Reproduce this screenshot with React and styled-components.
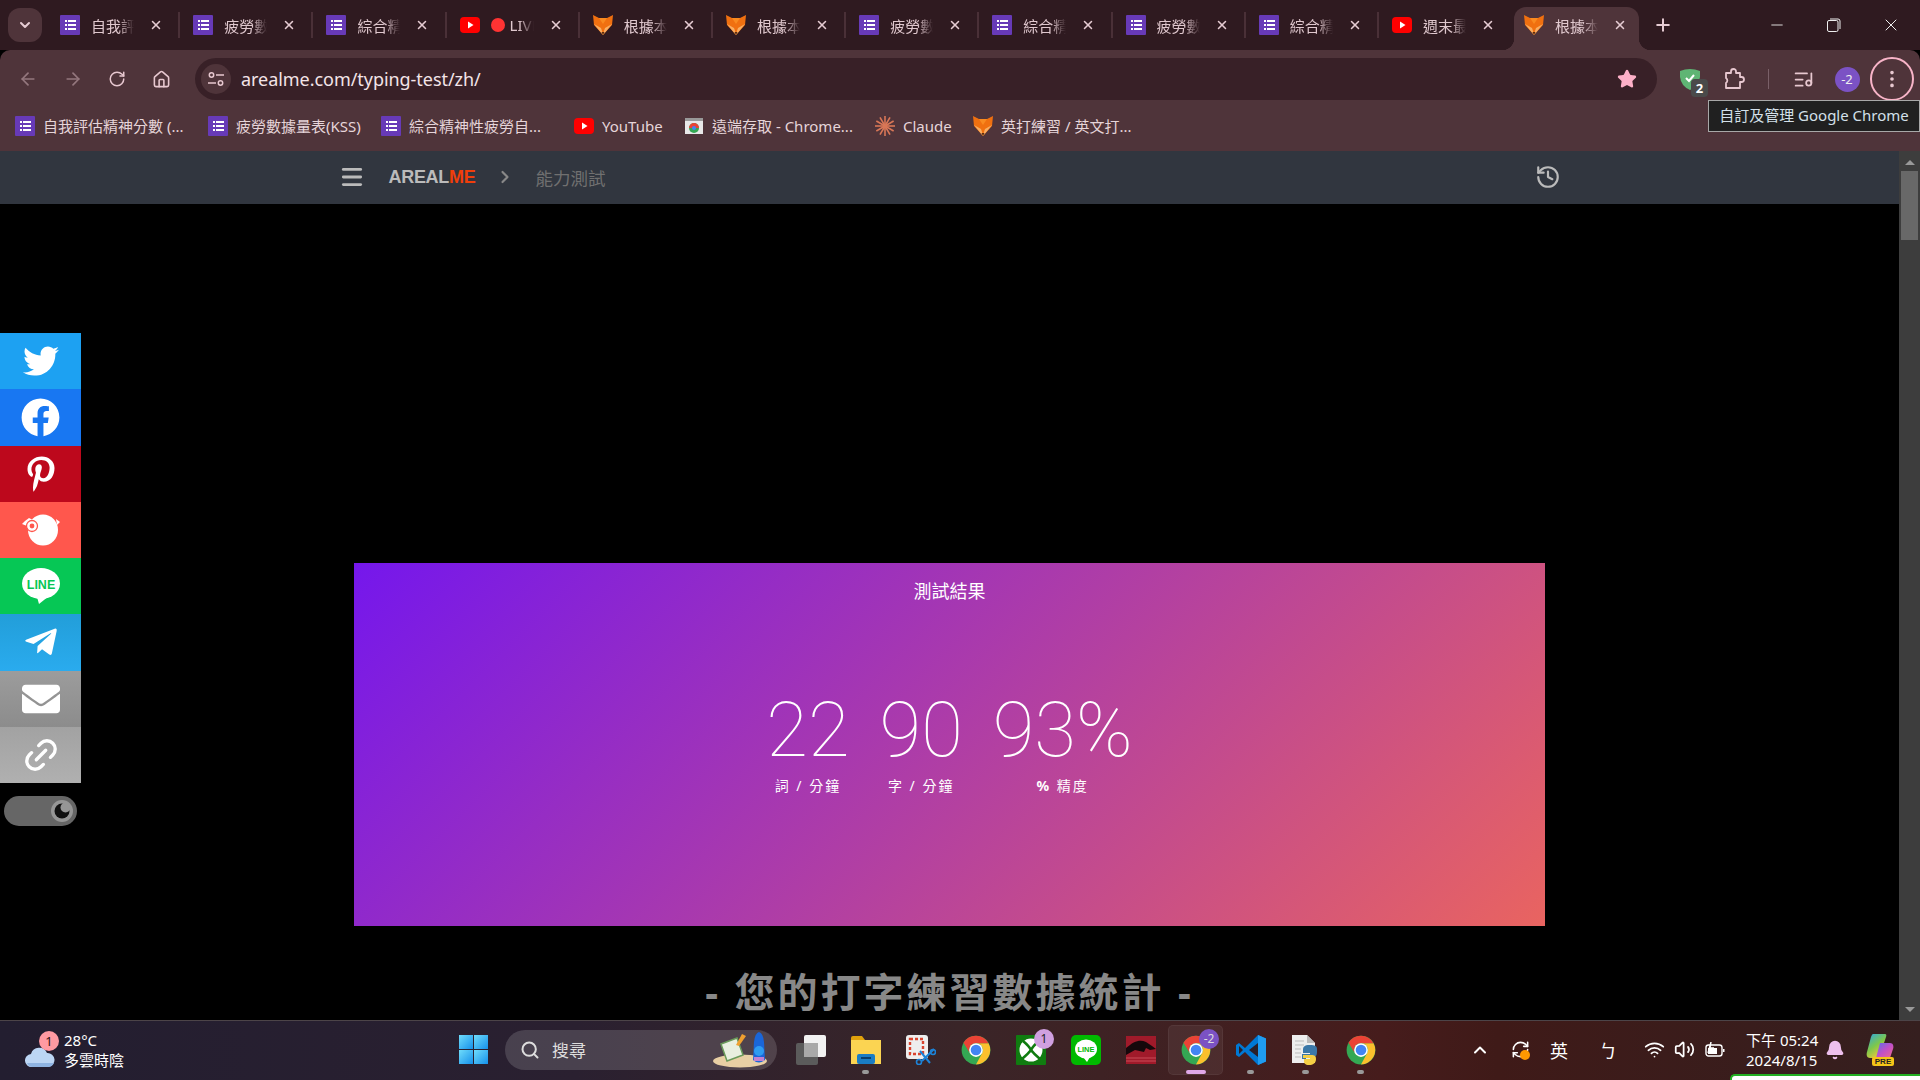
import styled, { createGlobalStyle } from "styled-components";
import {
  ArrowLeft,
  ArrowRight,
  RotateCw,
  Home,
  X,
  Plus,
  Minus,
  ChevronDown,
  ChevronUp,
  ChevronRight,
  Menu,
  History,
  MoreVertical,
  ListMusic,
  Star,
  Search,
  Link2,
  Bell,
  Wifi,
  Volume2,
  RefreshCw,
} from "lucide-react";
import {
  FaTwitter,
  FaFacebook,
  FaPinterestP,
  FaTelegramPlane,
  FaEnvelope,
} from "react-icons/fa";

const FONT = `"Noto Sans", "Noto Sans CJK TC", sans-serif`;

const GlobalStyle = createGlobalStyle`
  html, body {
    margin: 0;
    padding: 0;
    background: #000;
    overflow: hidden;
  }
  * {
    box-sizing: border-box;
  }
`;

/* little drawn icons */
const FormsIcon = () => (
  <svg width="20" height="20" viewBox="0 0 20 20">
    <rect width="20" height="20" rx="1" fill="#673ab7" />
    <rect x="5" y="5" width="2" height="2" fill="#fff" />
    <rect x="8" y="5" width="8" height="2" fill="#fff" />
    <rect x="5" y="9" width="2" height="2" fill="#fff" />
    <rect x="8" y="9" width="8" height="2" fill="#fff" />
    <rect x="5" y="13" width="2" height="2" fill="#fff" />
    <rect x="8" y="13" width="8" height="2" fill="#fff" />
  </svg>
);

const YoutubeIcon = () => (
  <svg width="20" height="20" viewBox="0 0 20 20">
    <rect y="2" width="20" height="16" rx="4" fill="#f00" />
    <path d="M8 6.5 L13.5 10 L8 13.5 Z" fill="#fff" />
  </svg>
);

const FoxIcon = () => (
  <svg width="20" height="20" viewBox="0 0 20 20">
    <path d="M0 0 L6 3 H14 L20 0 L19 10 L10 20 L1 10 Z" fill="#f07010" />
    <path d="M1 9 L8 13 L10 19 L12 13 L19 9 L10 20 Z" fill="#f9ae62" />
    <path d="M6 3 H14 L10 9 Z" fill="#f98a20" />
    <path d="M8.5 17 H11.5 L10 20 Z" fill="#5a2d10" />
  </svg>
);

const ClaudeIcon = () => (
  <svg width="20" height="20" viewBox="0 0 20 20" stroke="#d97757" strokeWidth="1.6">
    {[0, 30, 60, 90, 120, 150, 180, 210, 240, 270, 300, 330].map((a) => (
      <line key={a} x1="10" y1="10" x2="10" y2="0" transform={`rotate(${a} 10 10)`} />
    ))}
  </svg>
);

const RemoteIcon = () => (
  <svg width="20" height="20" viewBox="0 0 20 20">
    <rect x="1" y="2" width="18" height="16" fill="#e8e8e8" />
    <rect x="1" y="2" width="18" height="3" fill="#999" />
    <circle cx="10" cy="12" r="5" fill="#34a853" />
    <path d="M5 12a5 5 0 0 1 10 0z" fill="#ea4335" />
    <circle cx="10" cy="12" r="2" fill="#4285f4" />
  </svg>
);

const SiteInfoIcon = () => (
  <svg width="18" height="18" viewBox="0 0 18 18" fill="none" stroke="currentColor" strokeWidth="1.5">
    <circle cx="4.5" cy="5" r="2.2" />
    <path d="M9 5 H17" />
    <path d="M1 13 H9" />
    <circle cx="13.5" cy="13" r="2.2" />
  </svg>
);

const PuzzleIcon = () => (
  <svg width="22" height="22" viewBox="0 0 22 22" fill="none" stroke="currentColor" strokeWidth="1.8" strokeLinejoin="round">
    <path d="M3 5 H8 V3.5 A2.5 2.5 0 0 1 13 3.5 V5 H17 V9 H18.5 A2.5 2.5 0 0 1 18.5 14 H17 V20 H3 V15 A3 3 0 0 0 3 10 Z" />
  </svg>
);

const ChromeIcon = () => (
  <svg width="30" height="30" viewBox="0 0 48 48">
    <circle cx="24" cy="24" r="23" fill="#34a853" />
    <path d="M24 13h20a23 23 0 0 1-20 34l9.5-17.5A11 11 0 0 0 24 13z" fill="#fbc02d" />
    <path d="M4 12.5A23 23 0 0 1 44 13H24a11 11 0 0 0-9.5 16.5z" fill="#ea4335" />
    <circle cx="24" cy="24" r="11" fill="#fff" />
    <circle cx="24" cy="24" r="8.5" fill="#4285f4" />
  </svg>
);

const TaskViewIcon = () => (
  <svg width="30" height="30" viewBox="0 0 30 30">
    <rect x="0" y="8" width="22" height="22" rx="2" fill="#5b5b5b" />
    <rect x="8" y="0" width="22" height="22" rx="2" fill="#f2f2f2" />
    <rect x="8" y="8" width="14" height="14" fill="#a9a9a9" />
  </svg>
);

const FolderIcon = () => (
  <svg width="30" height="30" viewBox="0 0 30 30">
    <path d="M0 3a2 2 0 0 1 2-2h9l3 4H0z" fill="#e0a10c" />
    <rect y="5" width="30" height="24" fill="#fbd452" />
    <rect x="6" y="19" width="18" height="10" rx="2" fill="#1a7dc4" />
    <rect x="10" y="22" width="10" height="2" fill="#083f6e" />
  </svg>
);

const SnipIcon = () => (
  <svg width="30" height="30" viewBox="0 0 30 30">
    <rect width="22" height="24" rx="3" fill="#eee" />
    <rect x="4" y="4" width="13" height="15" fill="none" stroke="#d9442f" strokeWidth="2.4" strokeDasharray="3 2" />
    <path d="M14 16 L24 28 M28 14 L16 26" stroke="#1d82d6" strokeWidth="2" />
    <circle cx="13" cy="27" r="2.5" fill="none" stroke="#1d82d6" strokeWidth="1.6" />
    <circle cx="27" cy="17" r="2.5" fill="none" stroke="#1d82d6" strokeWidth="1.6" />
  </svg>
);

const XboxIcon = () => (
  <svg width="30" height="30" viewBox="0 0 30 30">
    <rect width="30" height="30" rx="1" fill="#107c10" />
    <circle cx="15" cy="15" r="11.5" fill="#fff" />
    <path d="M7 6 Q13 11 15 15 Q17 11 23 6" fill="none" stroke="#107c10" strokeWidth="2.6" />
    <path d="M6 24 Q12 19 15 15 Q18 19 24 24" fill="none" stroke="#107c10" strokeWidth="2.6" />
  </svg>
);

const LineAppIcon = () => (
  <svg width="30" height="30" viewBox="0 0 30 30">
    <rect width="30" height="30" rx="5" fill="#00b900" />
    <ellipse cx="15" cy="14" rx="11" ry="9.5" fill="#fff" />
    <path d="M12 22 L16 27 L19 22 Z" fill="#fff" />
    <text x="15" y="17" textAnchor="middle" fontSize="7.5" fontWeight="700" fontFamily="Liberation Sans" fill="#00b900">LINE</text>
  </svg>
);

const DragonIcon = () => (
  <svg width="30" height="30" viewBox="0 0 30 30">
    <rect y="1" width="30" height="28" fill="#a01a2a" />
    <path d="M0 13 C8 6 14 4 20 7 L26 11 L30 14 L24 15 L20 13 L18 17 L9 15 L0 20 Z" fill="#16080b" />
    <path d="M0 23 H30 M0 26 H30" stroke="#c84a56" strokeWidth="1" />
  </svg>
);

const VscodeIcon = () => (
  <svg width="30" height="30" viewBox="0 0 30 30">
    <path d="M22 0 L30 3.5 V26.5 L22 30 L9 17 L3 22 L0 20 V10 L3 8 L9 13 Z" fill="#0078d4" />
    <path d="M22 0 L30 3.5 V26.5 L22 30 Z" fill="#1f9cf0" />
    <path d="M22 8 L13 15 L22 22 Z" fill="#2a1f28" />
    <path d="M3 11 L7 15 L3 19 Z" fill="#2a1f28" />
  </svg>
);

const PythonFileIcon = () => (
  <svg width="30" height="30" viewBox="0 0 30 30">
    <path d="M1 0 H16 L24 8 V28 H1 Z" fill="#eee" />
    <path d="M16 0 V8 H24 Z" fill="#bbb" />
    <path d="M4 6 H13 M4 10 H13 M4 14 H10 M4 18 H10 M4 22 H10" stroke="#bbb" strokeWidth="1" />
    <path d="M19 10 C13 10 12 12 12 15 V18 H19 V19 H11 V24 H15 V22 H22 C25 22 26 20 26 17 V14 C26 11 24 10 19 10 Z" fill="#3b78a8" />
    <path d="M12 20 H20 C24 20 25 21 25 24 C25 28 22 30 18 30 C14 30 13 28 13 26 V24 H19 V23 H12 Z" fill="#f5cf45" />
  </svg>
);

const WindowsLogo = () => (
  <svg width="29" height="29" viewBox="0 0 29 29">
    <defs>
      <linearGradient id="winBlue" x1="0" y1="0" x2="1" y2="1">
        <stop offset="0" stopColor="#6fdcfb" />
        <stop offset="1" stopColor="#1590ea" />
      </linearGradient>
    </defs>
    <rect width="14" height="14" fill="url(#winBlue)" />
    <rect x="15" width="14" height="14" fill="url(#winBlue)" />
    <rect y="15" width="14" height="14" fill="url(#winBlue)" />
    <rect x="15" y="15" width="14" height="14" fill="url(#winBlue)" />
  </svg>
);

const WeatherCloud = () => (
  <svg width="30" height="22" viewBox="0 0 30 22">
    <path d="M7 21a6.5 6.5 0 0 1-1-13 8.5 8.5 0 0 1 16-1 7 7 0 0 1 1 14z" fill="#bcd6f4" />
    <path d="M7 21a6 6 0 0 1-5-4h27a7 7 0 0 1-6 4z" fill="#8fb4e2" />
    <rect x="20" y="0" width="5" height="4" fill="#ef8a2a" />
  </svg>
);

const SearchArt = () => (
  <svg width="58" height="36" viewBox="0 0 58 36">
    <ellipse cx="27" cy="29" rx="27" ry="6.5" fill="#e8cfa4" />
    <path d="M8 12 L24 6 L30 23 L14 29 Z" fill="#e9efe0" stroke="#6a9a5a" strokeWidth="1.5" />
    <path d="M29 2 L33 4 L26 14 L23 13 Z" fill="#f0a030" />
    <path d="M41 10 Q42 1 46 0 Q50 1 51 10 L52 28 Q46 33 40 28 Z" fill="#1a66d8" />
    <rect x="41" y="25" width="10" height="4" fill="#c080d0" />
    <circle cx="46" cy="19" r="5" fill="#2e9bf0" />
  </svg>
);

const CopilotIcon = () => (
  <svg width="28" height="26" viewBox="0 0 28 26">
    <defs>
      <linearGradient id="copA" x1="0" y1="0" x2="0.6" y2="1">
        <stop offset="0" stopColor="#2aa5e8" />
        <stop offset="0.55" stopColor="#7ec84a" />
        <stop offset="1" stopColor="#f2c83a" />
      </linearGradient>
      <linearGradient id="copB" x1="0" y1="0" x2="1" y2="1">
        <stop offset="0" stopColor="#5a70e8" />
        <stop offset="0.5" stopColor="#c050c8" />
        <stop offset="1" stopColor="#f06a8a" />
      </linearGradient>
    </defs>
    <path d="M7 0 H19 Q21 0 20 3 L13 24 H4 C1 24 0 21 1 18 L5 3 Q6 0 7 0 Z" fill="url(#copA)" />
    <path d="M14 9 H24 C27 9 28 12 27 15 L24 24 H10 Z" fill="url(#copB)" />
  </svg>
);

const ShieldIcon = () => (
  <svg width="20" height="22" viewBox="0 0 20 22">
    <path d="M0 3 Q10 -1 20 3 V9 Q19 18 10 22 Q1 18 0 9 Z" fill="#5fb574" />
    <path d="M6 10 L9 13 L14 7" stroke="#fff" strokeWidth="2" fill="none" />
  </svg>
);

const BatteryIcon = () => (
  <svg width="20" height="16" viewBox="0 0 20 16" fill="none" stroke="#fff" strokeWidth="1.4">
    <rect x="1" y="3" width="16" height="11" rx="2.5" />
    <rect x="18" y="7" width="1.5" height="3" fill="#fff" stroke="none" />
    <path d="M3 11 L6 0 L5 6 L9 6" />
    <rect x="3" y="6" width="9" height="6" fill="#fff" stroke="none" />
  </svg>
);

const PlurkIcon = () => (
  <svg width="38" height="34" viewBox="0 0 38 34">
    <ellipse cx="21" cy="17" rx="15" ry="15.5" fill="#fff" />
    <path d="M3 8 L7 5 L11 7 L10 12 L5 13 L0 11 Z" fill="#fff" />
    <circle cx="10" cy="13" r="5.5" fill="#fff" stroke="#ff574d" strokeWidth="1.3" />
    <circle cx="10" cy="13" r="2.4" fill="#ff574d" />
    <path d="M34 6 L38 9 L35 12 Z" fill="#fff" />
  </svg>
);

const LineShareIcon = () => (
  <svg width="38" height="36" viewBox="0 0 38 36">
    <ellipse cx="19" cy="15.5" rx="19" ry="15.5" fill="#fff" />
    <path d="M15 29 L17 36 L27 28 Z" fill="#fff" />
    <text x="19" y="21" textAnchor="middle" fontSize="12.5" fontWeight="700" fontFamily="Liberation Sans" fill="#06c755">LINE</text>
  </svg>
);

const MoonKnob = () => (
  <svg width="22" height="22" viewBox="0 0 22 22">
    <circle cx="11" cy="11" r="11" fill="#969696" />
    <circle cx="11" cy="11" r="7.5" fill="#111" />
    <circle cx="14.5" cy="7.5" r="5" fill="#969696" />
  </svg>
);

const RestoreGlyph = () => (
  <svg width="14" height="14" viewBox="0 0 14 14" fill="none" stroke="currentColor" strokeWidth="1">
    <rect x="0.5" y="2.5" width="10.5" height="11" rx="1.5" />
    <path d="M3 1 H11 A2 2 0 0 1 13 3 V11" />
  </svg>
);

const tabs = [
  { icon: <FormsIcon />, title: "自我評" },
  { icon: <FormsIcon />, title: "疲勞數" },
  { icon: <FormsIcon />, title: "綜合精" },
  { icon: <YoutubeIcon />, title: "LIVE", live: true },
  { icon: <FoxIcon />, title: "根據本" },
  { icon: <FoxIcon />, title: "根據本" },
  { icon: <FormsIcon />, title: "疲勞數" },
  { icon: <FormsIcon />, title: "綜合精" },
  { icon: <FormsIcon />, title: "疲勞數" },
  { icon: <FormsIcon />, title: "綜合精" },
  { icon: <YoutubeIcon />, title: "週末最", last: true },
];

const bookmarks = [
  { icon: <FormsIcon />, label: "自我評估精神分數 (...", w: 193 },
  { icon: <FormsIcon />, label: "疲勞數據量表(KSS)", w: 173 },
  { icon: <FormsIcon />, label: "綜合精神性疲勞自...", w: 193 },
  { icon: <YoutubeIcon />, label: "YouTube", w: 110 },
  { icon: <RemoteIcon />, label: "遠端存取 - Chrome...", w: 191 },
  { icon: <ClaudeIcon />, label: "Claude", w: 98 },
  { icon: <FoxIcon />, label: "英打練習 / 英文打...", w: 170 },
];

const shares = [
  { color: "#1da1f2", icon: <FaTwitter size={36} color="#fff" /> },
  { color: "#1877f2", icon: <FaFacebook size={39} color="#fff" /> },
  { color: "#bd081c", icon: <FaPinterestP size={36} color="#fff" /> },
  { color: "#ff574d", icon: <PlurkIcon /> },
  { color: "#06c755", icon: <LineShareIcon /> },
  { color: "linear-gradient(#229ed9, #2aabee)", icon: <FaTelegramPlane size={36} color="#fff" /> },
  { color: "linear-gradient(#9c9c9c, #8c8c8c)", icon: <FaEnvelope size={38} color="#fff" /> },
  { color: "linear-gradient(#a2a2a2, #b0b0b0)", icon: <Link2 size={40} color="#fff" strokeWidth={2} style={{ transform: "rotate(-45deg)" }} /> },
];

const stats = [
  { value: "22", label: "詞 / 分鐘" },
  { value: "90", label: "字 / 分鐘" },
  { value: "93%", mark: "%", label: " 精度" },
];

const apps = [
  { icon: <TaskViewIcon /> },
  { icon: <FolderIcon />, running: true },
  { icon: <SnipIcon /> },
  { icon: <ChromeIcon /> },
  { icon: <XboxIcon />, badge: "1" },
  { icon: <LineAppIcon /> },
  { icon: <DragonIcon /> },
  { icon: <ChromeIcon />, badge: "-2", active: true },
  { icon: <VscodeIcon />, running: true },
  { icon: <PythonFileIcon />, running: true },
  { icon: <ChromeIcon />, running: true },
];

export default function App() {
  return (
    <Screen>
      <GlobalStyle />
      <TabStrip>
        <TabSearch>
          <ChevronDown size={16} strokeWidth={3} />
        </TabSearch>
        {tabs.map((tab, i) => (
          <Tab key={i} $last={tab.last}>
            {tab.icon}
            <TabTitle>
              {tab.live && <LiveDot />}
              {tab.title}
            </TabTitle>
            <TabClose>
              <X size={14} strokeWidth={2.6} />
            </TabClose>
          </Tab>
        ))}
        <ActiveTab>
          <FoxIcon />
          <TabTitle>根據本</TabTitle>
          <TabClose>
            <X size={14} strokeWidth={2.6} />
          </TabClose>
        </ActiveTab>
        <NewTab>
          <Plus size={20} strokeWidth={2.4} />
        </NewTab>
        <WindowControls>
          <WindowButton>
            <Minus size={18} strokeWidth={1.2} />
          </WindowButton>
          <WindowButton>
            <RestoreGlyph />
          </WindowButton>
          <WindowButton>
            <X size={20} strokeWidth={1.2} />
          </WindowButton>
        </WindowControls>
      </TabStrip>

      <Toolbar>
        <NavButton $dim>
          <ArrowLeft size={20} />
        </NavButton>
        <NavButton $dim>
          <ArrowRight size={20} />
        </NavButton>
        <NavButton>
          <RotateCw size={18} />
        </NavButton>
        <NavButton>
          <Home size={19} />
        </NavButton>
        <Omnibox>
          <SiteInfo>
            <SiteInfoIcon />
          </SiteInfo>
          <Url>arealme.com/typing-test/zh/</Url>
          <Star size={20} fill="#fdb0c8" color="#fdb0c8" />
        </Omnibox>
        <ToolGroup>
          <ToolSlot>
            <ShieldIcon />
            <ExtBadge>2</ExtBadge>
          </ToolSlot>
          <ToolSlot>
            <PuzzleIcon />
          </ToolSlot>
          <ToolDivider />
          <ToolSlot>
            <ListMusic size={21} />
          </ToolSlot>
          <ToolSlot>
            <Avatar>-2</Avatar>
          </ToolSlot>
          <ToolSlot>
            <MenuRing>
              <MoreVertical size={22} />
            </MenuRing>
          </ToolSlot>
        </ToolGroup>
        <Tooltip>自訂及管理 Google Chrome</Tooltip>
      </Toolbar>

      <BookmarkBar>
        {bookmarks.map((b) => (
          <Bookmark key={b.label} $w={b.w}>
            {b.icon}
            <span>{b.label}</span>
          </Bookmark>
        ))}
      </BookmarkBar>

      <Viewport>
        <Page>
          <SiteHeader>
            <HeaderInner>
              <HeaderLeft>
                <Menu size={26} color="#bbb" strokeWidth={2.6} />
                <Brand>
                  AREAL<BrandAccent>ME</BrandAccent>
                </Brand>
                <ChevronRight size={20} color="#888" strokeWidth={2.6} />
                <Crumb>能力測試</Crumb>
              </HeaderLeft>
              <History size={26} color="#bbb" />
            </HeaderInner>
          </SiteHeader>
          <AdSlot />
          <ResultCard>
            <CardTitle>測試結果</CardTitle>
            <Stats>
              {stats.map((s) => (
                <Stat key={s.value}>
                  <StatValue>{s.value}</StatValue>
                  <StatLabel>
                    {s.mark && <strong>{s.mark}</strong>}
                    {s.label}
                  </StatLabel>
                </Stat>
              ))}
            </Stats>
          </ResultCard>
          <SectionHeading>- 您的打字練習數據統計 -</SectionHeading>
          <ShareRail>
            {shares.map((s, i) => (
              <ShareButton key={i} $bg={s.color}>
                {s.icon}
              </ShareButton>
            ))}
            <ThemeToggle>
              <MoonKnob />
            </ThemeToggle>
          </ShareRail>
        </Page>
        <Scrollbar>
          <ScrollArrow $up />
          <ScrollThumb />
          <ScrollArrow />
        </Scrollbar>
      </Viewport>

      <Taskbar>
        <Weather>
          <WeatherArt>
            <WeatherCloud />
            <WeatherBadge>1</WeatherBadge>
          </WeatherArt>
          <WeatherText>
            <span>28°C</span>
            <span>多雲時陰</span>
          </WeatherText>
        </Weather>
        <WindowsLogo />
        <SearchBox>
          <Search size={20} color="#ddd" strokeWidth={2.4} />
          <SearchText>搜尋</SearchText>
          <SearchArt />
        </SearchBox>
        <AppRow>
          {apps.map((app, i) => (
            <AppSlot key={i} $active={app.active}>
              {app.icon}
              {app.badge && <AppBadge $dark={app.active}>{app.badge}</AppBadge>}
              {(app.running || app.active) && <AppDot $active={app.active} />}
            </AppSlot>
          ))}
        </AppRow>
        <Tray>
          <TraySlot $w={40}>
            <ChevronUp size={20} strokeWidth={2.4} />
          </TraySlot>
          <TraySlot $w={40}>
            <RefreshCw size={19} />
            <SyncDot />
          </TraySlot>
          <TraySlot $w={38}>
            <TrayText>英</TrayText>
          </TraySlot>
          <TraySlot $w={60}>
            <TrayText>ㄅ</TrayText>
          </TraySlot>
          <TraySlot $w={32}>
            <Wifi size={21} />
          </TraySlot>
          <TraySlot $w={29}>
            <Volume2 size={21} />
          </TraySlot>
          <TraySlot $w={32}>
            <BatteryIcon />
          </TraySlot>
          <Clock>
            <span>下午 05:24</span>
            <span>2024/8/15</span>
          </Clock>
          <TraySlot $w={24}>
            <Bell size={20} fill="#eec0ee" color="#eec0ee" />
          </TraySlot>
          <CopilotSlot>
            <CopilotIcon />
            <PreBadge>PRE</PreBadge>
          </CopilotSlot>
        </Tray>
        <NotifyBar />
      </Taskbar>
    </Screen>
  );
}

const Screen = styled.div`
  width: 1920px;
  height: 1080px;
  display: flex;
  flex-direction: column;
  overflow: hidden;
  font-family: ${FONT};
  background: #000;
`;

const TabStrip = styled.div`
  height: 50px;
  flex: none;
  display: flex;
  align-items: center;
  padding-left: 8px;
  background: #2f1a20;
  color: #e6ccd3;
`;

const TabSearch = styled.div`
  width: 34px;
  height: 34px;
  margin-right: 5px;
  border-radius: 12px;
  background: #4f343a;
  display: flex;
  align-items: center;
  justify-content: center;
`;

const Tab = styled.div`
  width: 133.2px;
  height: 26px;
  flex: none;
  display: flex;
  align-items: center;
  padding-left: 13px;
  border-right: 2px solid ${(p) => (p.$last ? "transparent" : "#4a3037")};
`;

const ActiveTab = styled.div`
  position: relative;
  width: 125px;
  height: 43px;
  flex: none;
  margin-top: 7px;
  margin-left: 2px;
  padding: 0 0 7px 10px;
  display: flex;
  align-items: center;
  background: #4f343a;
  border-radius: 12px 12px 0 0;

  &::before,
  &::after {
    content: "";
    position: absolute;
    bottom: 0;
    width: 12px;
    height: 12px;
  }
  &::before {
    left: -12px;
    background: radial-gradient(circle at 0 0, transparent 12px, #4f343a 12.5px);
  }
  &::after {
    right: -12px;
    background: radial-gradient(circle at 100% 0, transparent 12px, #4f343a 12.5px);
  }
`;

const TabTitle = styled.div`
  width: 43px;
  margin-left: 11px;
  display: flex;
  align-items: center;
  gap: 5px;
  overflow: hidden;
  white-space: nowrap;
  font-size: 15px;
  color: #e0c8ce;
  -webkit-mask-image: linear-gradient(90deg, #000 65%, transparent 100%);
  mask-image: linear-gradient(90deg, #000 65%, transparent 100%);
`;

const LiveDot = styled.i`
  width: 14px;
  height: 14px;
  flex: none;
  border-radius: 50%;
  background: #f33;
`;

const TabClose = styled.div`
  width: 14px;
  height: 14px;
  margin-left: 15px;
  display: flex;
`;

const NewTab = styled.div`
  width: 28px;
  margin-left: 10px;
  display: flex;
  justify-content: center;
`;

const WindowControls = styled.div`
  margin-left: auto;
  display: flex;
  padding-right: 1px;
`;

const WindowButton = styled.div`
  width: 57px;
  display: flex;
  justify-content: center;
  align-items: center;
  color: #eee;
`;

const Toolbar = styled.div`
  position: relative;
  z-index: 2;
  height: 50px;
  flex: none;
  display: flex;
  align-items: center;
  padding: 8px 0 0 6px;
  background: #4f343a;
  border-radius: 10px 10px 0 0;
  color: #e8c8d0;
`;

const NavButton = styled.div`
  width: 44.5px;
  flex: none;
  display: flex;
  justify-content: center;
  opacity: ${(p) => (p.$dim ? 0.45 : 1)};
`;

const Omnibox = styled.div`
  width: 1462px;
  height: 42px;
  flex: none;
  margin-left: 11px;
  padding: 0 20px 0 6px;
  display: flex;
  align-items: center;
  border-radius: 21px;
  background: #382027;
`;

const SiteInfo = styled.div`
  width: 30px;
  height: 30px;
  flex: none;
  border-radius: 50%;
  background: #4f343a;
  display: flex;
  align-items: center;
  justify-content: center;
`;

const Url = styled.div`
  flex: 1;
  margin-left: 10px;
  font-size: 18px;
  letter-spacing: -0.05px;
  color: #f3e4e8;
`;

const ToolGroup = styled.div`
  margin-left: 11px;
  display: flex;
  align-items: center;
`;

const ToolSlot = styled.div`
  position: relative;
  width: 44px;
  height: 42px;
  flex: none;
  display: flex;
  align-items: center;
  justify-content: center;
`;

const ExtBadge = styled.span`
  position: absolute;
  left: 23px;
  top: 21px;
  width: 17px;
  height: 18px;
  border-radius: 4px;
  background: #4a4a4a;
  color: #fff;
  font-size: 13px;
  font-weight: 700;
  line-height: 18px;
  text-align: center;
`;

const ToolDivider = styled.div`
  width: 1px;
  height: 20px;
  margin: 0 12px;
  background: #7a6068;
`;

const Avatar = styled.div`
  width: 25px;
  height: 25px;
  border-radius: 50%;
  background: #7b52c4;
  color: #eee;
  font-size: 13px;
  line-height: 25px;
  text-align: center;
`;

const MenuRing = styled.div`
  width: 44px;
  height: 44px;
  flex: none;
  margin-left: 1px;
  border: 2px solid #f8b4c8;
  border-radius: 50%;
  display: flex;
  align-items: center;
  justify-content: center;
`;

const Tooltip = styled.div`
  position: absolute;
  top: 50px;
  right: 0;
  width: 212px;
  height: 32px;
  border: 1px solid #a8a8a8;
  background: #202020;
  color: #d4e0ea;
  font-size: 15px;
  line-height: 29px;
  text-align: center;
  white-space: nowrap;
`;

const BookmarkBar = styled.div`
  height: 51px;
  flex: none;
  display: flex;
  align-items: center;
  padding-left: 15px;
  background: #4f343a;
`;

const Bookmark = styled.div`
  width: ${(p) => p.$w}px;
  flex: none;
  display: flex;
  align-items: center;
  gap: 8px;
  font-size: 15px;
  color: #e6d5d9;
  white-space: nowrap;
`;

const Viewport = styled.div`
  flex: 1;
  min-height: 0;
  display: flex;
`;

const Page = styled.div`
  position: relative;
  flex: 1;
  min-width: 0;
  overflow: hidden;
  background: #000;
`;

const SiteHeader = styled.div`
  height: 53px;
  background: #31363f;
`;

const HeaderInner = styled.div`
  width: 1222px;
  height: 100%;
  margin: 0 auto;
  padding-bottom: 1px;
  display: flex;
  align-items: center;
  justify-content: space-between;
`;

const HeaderLeft = styled.div`
  display: flex;
  align-items: center;
`;

const Brand = styled.div`
  margin: 0 20px 0 24px;
  font-family: "Liberation Sans", sans-serif;
  font-size: 18px;
  font-weight: 700;
  letter-spacing: -0.3px;
  color: #bbb;
`;

const BrandAccent = styled.span`
  color: #f03e0a;
`;

const Crumb = styled.div`
  margin-left: 20px;
  font-size: 17.5px;
  color: #707070;
`;

const AdSlot = styled.div`
  height: 359px;
`;

const ResultCard = styled.div`
  width: 1191px;
  height: 363px;
  margin: 0 auto;
  padding-top: 16px;
  background: linear-gradient(135deg, #7517ec 0%, #e96460 100%);
  color: #fff;
  text-align: center;
`;

const CardTitle = styled.div`
  font-size: 18px;
  line-height: 24px;
`;

const Stats = styled.div`
  margin-top: 89px;
  display: flex;
  justify-content: center;
  gap: 30px;
`;

const Stat = styled.div`
  display: flex;
  flex-direction: column;
  align-items: center;
`;

const StatValue = styled.div`
  font-family: Roboto, sans-serif;
  font-size: 76px;
  font-weight: 100;
  line-height: 76px;
`;

const StatLabel = styled.div`
  margin-top: 8px;
  font-size: 14px;
  line-height: 20px;
  letter-spacing: 2px;
  white-space: pre;
`;

const SectionHeading = styled.h2`
  margin: 42px 0 0;
  font-size: 40px;
  font-weight: 700;
  line-height: 48px;
  letter-spacing: 3px;
  color: #888;
  text-align: center;
`;

const ShareRail = styled.div`
  position: absolute;
  left: 0;
  top: 182px;
  width: 81px;
`;

const ShareButton = styled.div`
  height: 56.25px;
  display: flex;
  align-items: center;
  justify-content: center;
  background: ${(p) => p.$bg};
`;

const ThemeToggle = styled.div`
  width: 73px;
  height: 30px;
  margin: 13px 0 0 4px;
  padding-right: 4px;
  display: flex;
  align-items: center;
  justify-content: flex-end;
  border-radius: 15px;
  background: #666;
`;

const Scrollbar = styled.div`
  width: 21px;
  flex: none;
  display: flex;
  flex-direction: column;
  align-items: center;
  background: #3d3d3d;
`;

const ScrollArrow = styled.div`
  width: 0;
  height: 0;
  margin: ${(p) => (p.$up ? "9px 0 6px" : "auto 0 8px")};
  border-left: 5px solid transparent;
  border-right: 5px solid transparent;
  ${(p) => (p.$up ? "border-bottom: 5px solid #999;" : "border-top: 5px solid #999;")}
`;

const ScrollThumb = styled.div`
  width: 17px;
  height: 69px;
  background: #686868;
`;

const Taskbar = styled.div`
  position: relative;
  height: 60px;
  flex: none;
  display: flex;
  align-items: center;
  padding-bottom: 2px;
  border-top: 1px solid #4c4448;
  background: linear-gradient(90deg, #231e30 0%, #2a2030 30%, #3a2528 50%, #461c1c 72%, #3f1a18 78%, #351f1f 100%);
  color: #fff;
`;

const Weather = styled.div`
  width: 459px;
  flex: none;
  padding-left: 25px;
  display: flex;
  align-items: flex-end;
`;

const WeatherArt = styled.div`
  position: relative;
  width: 30px;
  height: 22px;
  margin-bottom: 2px;
`;

const WeatherBadge = styled.span`
  position: absolute;
  left: 14px;
  top: -15px;
  width: 20px;
  height: 20px;
  border-radius: 50%;
  background: #ff9aa2;
  color: #311;
  font-size: 13px;
  line-height: 20px;
  text-align: center;
`;

const WeatherText = styled.div`
  margin-left: 9px;
  display: flex;
  flex-direction: column;
  font-size: 15px;
  line-height: 20px;
`;

const SearchBox = styled.div`
  width: 272px;
  height: 40px;
  flex: none;
  margin-left: 17px;
  padding: 0 6px 0 15px;
  display: flex;
  align-items: center;
  justify-content: space-between;
  border-radius: 20px;
  background: rgba(255, 255, 255, 0.15);
`;

const SearchText = styled.div`
  flex: 1;
  margin-left: 12px;
  font-size: 17px;
  color: #ddd;
`;

const AppRow = styled.div`
  margin-left: 6px;
  display: flex;
`;

const AppSlot = styled.div`
  position: relative;
  width: 55px;
  height: 50px;
  flex: none;
  display: flex;
  align-items: center;
  justify-content: center;
  border-radius: 5px;
  ${(p) => p.$active && "background: rgba(255, 255, 255, 0.06); box-shadow: inset 0 0 0 1px rgba(255, 255, 255, 0.05);"}
`;

const AppBadge = styled.span`
  position: absolute;
  left: 31px;
  top: 4px;
  width: 20px;
  height: 20px;
  border-radius: 50%;
  background: ${(p) => (p.$dark ? "#7b52c4" : "#d0a0e0")};
  color: ${(p) => (p.$dark ? "#ddd" : "#222")};
  font-size: 12px;
  line-height: 20px;
  text-align: center;
`;

const AppDot = styled.i`
  position: absolute;
  bottom: 1px;
  left: 50%;
  width: ${(p) => (p.$active ? 20 : 7)}px;
  height: 4px;
  margin-left: ${(p) => (p.$active ? -10 : -3.5)}px;
  border-radius: 2px;
  background: ${(p) => (p.$active ? "#e0a8e8" : "#999")};
`;

const Tray = styled.div`
  margin-left: auto;
  padding-right: 26px;
  display: flex;
  align-items: center;
`;

const TraySlot = styled.div`
  position: relative;
  width: ${(p) => p.$w}px;
  flex: none;
  display: flex;
  align-items: center;
  justify-content: center;
`;

const SyncDot = styled.i`
  position: absolute;
  left: 20px;
  top: 10px;
  width: 10px;
  height: 10px;
  border-radius: 50%;
  background: #ff9800;
`;

const TrayText = styled.span`
  font-size: 18px;
`;

const Clock = styled.div`
  width: 92px;
  flex: none;
  padding-left: 15px;
  display: flex;
  flex-direction: column;
  font-size: 15px;
  line-height: 20px;
  white-space: nowrap;
`;

const CopilotSlot = styled.div`
  position: relative;
  width: 28px;
  height: 32px;
  flex: none;
  margin-left: 19px;
`;

const PreBadge = styled.span`
  position: absolute;
  left: 6px;
  bottom: 0;
  width: 22px;
  height: 9px;
  border-radius: 2px;
  background: #f5c518;
  color: #222;
  font-family: "Liberation Sans", sans-serif;
  font-size: 8px;
  font-weight: 700;
  line-height: 9px;
  text-align: center;
`;

const NotifyBar = styled.div`
  position: absolute;
  right: 0;
  bottom: 0;
  width: 190px;
  height: 6px;
  border: 2px solid #22b022;
  border-bottom: none;
  border-right: none;
  border-radius: 5px 0 0 0;
  background: #fff;
`;
